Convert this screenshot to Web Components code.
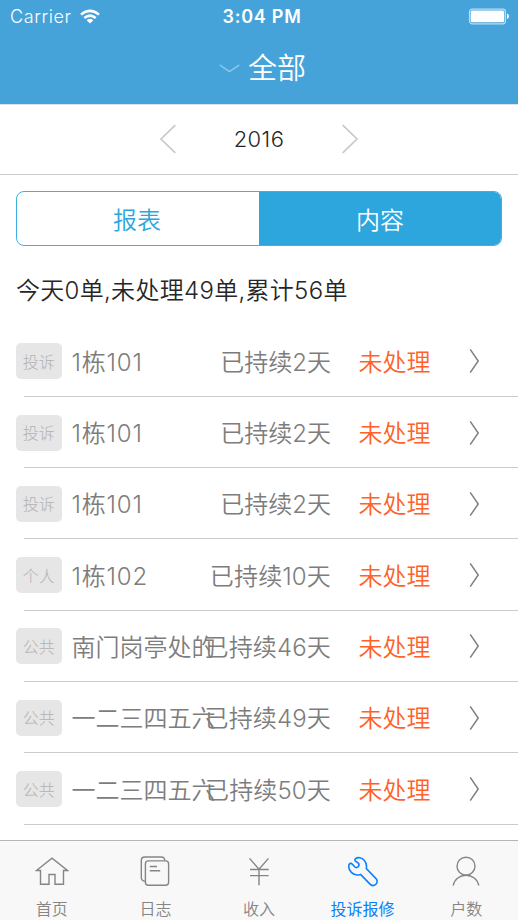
<!DOCTYPE html>
<html lang="zh-CN">
<head>
<meta charset="utf-8">
<meta name="viewport" content="width=device-width">
<title>投诉报修</title>
<style>
html, body { margin: 0; height: 100%; }
body { background: #fff; overflow: hidden; font-family: Inter, "Noto Sans CJK SC", sans-serif; font-weight: 350; }
</style>
</head>
<body>
<repair-app></repair-app>
<script>
const define = (name, html, setup) => customElements.define(name, class extends HTMLElement {
  constructor() {
    super();
    const t = document.createElement('template');
    t.innerHTML = html;
    this.attachShadow({ mode: 'open' }).append(t.content.cloneNode(true));
  }
  connectedCallback() { if (setup) setup(this, this.shadowRoot); }
});

define('status-bar', `
<style>
:host { display: grid; grid-template-columns: 1fr auto 1fr; align-items: center; height: 33px; padding: 0 9px 0 10px; box-sizing: border-box; color: #fff; font-size: 18px; }
.left { display: flex; align-items: center; gap: 8px; font-weight: 350; letter-spacing: .6px; }
.time { font-weight: 600; letter-spacing: .75px; padding-left: 5px; }
.right { display: flex; justify-content: flex-end; }
svg { display: block; }
</style>
<div class="left"><span>Carrier</span>
<svg width="20" height="16" viewBox="0 0 20 16" fill="none" stroke="#fff" stroke-width="2.5"><path d="M1 5.6Q10-1.8 19 5.6M4.3 9Q10 4.2 15.7 9"/><path d="M6.7 11.2Q10 8.5 13.3 11.2L10 14.6Z" fill="#fff" stroke="none"/></svg></div>
<span class="time">3:04 PM</span>
<div class="right"><svg width="41" height="17" viewBox="0 0 41 17"><rect x="1.5" y="1.2" width="36" height="14.6" rx="2.8" fill="none" stroke="#b9def2" stroke-width="1.2"/><rect x="2.7" y="2.5" width="33.5" height="11.7" rx="1.5" fill="#fff"/><path d="M39 5.5Q41 6 41 8.3T39 11Z" fill="#fff"/></svg></div>`);

define('nav-title', `
<style>
:host { display: flex; align-items: center; justify-content: center; gap: 8px; height: 71px; color: #fff; font-size: 29px; padding-left: 7px; }
svg { display: block; }
span { line-height: 40px; }
</style>
<svg width="21" height="9" viewBox="0 0 21 9" fill="none" stroke="#8ccbee" stroke-width="1.5"><path d="M.8 1L10.5 7.6 20.2 1"/></svg>
<span><slot></slot></span>`);

define('year-picker', `
<style>
:host { display: flex; align-items: center; justify-content: space-between; height: 71px; padding: 0 159px 1px; box-sizing: border-box; border-bottom: 1px solid #cbcbcb; border-top: 1px solid #d8e4ea; color: #262626; font-size: 22px; font-weight: 350; letter-spacing: .4px; }
svg { display: block; fill: none; stroke: #c9c9c9; stroke-width: 1.7; }
</style>
<svg width="18" height="30" viewBox="0 0 18 30"><path d="M16.3 1.2L2 15 16.3 28.8"/></svg>
<span><slot></slot></span>
<svg width="18" height="30" viewBox="0 0 18 30"><path d="M1.7 1.2L16 15 1.7 28.8"/></svg>`);

define('segment-control', `
<style>
:host { display: grid; grid-template-columns: 1fr 1fr; height: 55px; margin: 16px 16px 0; box-sizing: border-box; border: 1px solid #3fb0e2; border-radius: 8px; overflow: hidden; font-size: 24px; }
div { display: grid; place-items: center; color: #2ca6dd; padding: 0 2px 1px 0; }
.on { background: #2ca6dd; color: #fff; padding-right: 0; }
</style>
<div><slot name="first"></slot></div><div class="on"><slot name="second"></slot></div>`);

define('summary-line', `
<style>:host { display: flex; align-items: center; height: 79.6px; padding: 6px 16px 0; box-sizing: border-box; font-size: 24px; color: #262626; white-space: nowrap; letter-spacing: .3px; }</style>
<span><slot></slot></span>`);

define('ticket-row', `
<style>
:host { display: block; height: 71.3px; box-sizing: border-box; }
.row { display: grid; grid-template-columns: 55.5px 133.5px 126px 28px 110px auto; align-items: center; height: 100%; padding-left: 16px; box-sizing: border-box; font-size: 24px; color: #7d7d7d; white-space: nowrap; position: relative; }
.row::after { content: ""; position: absolute; left: 24px; right: 0; bottom: 0; height: 1px; background: #cbcbcb; }
.badge { display: grid; place-items: center; width: 45.5px; height: 36px; border-radius: 5px; background: #e6e6e6; color: #b2b2b2; font-size: 16px; font-weight: 300; box-sizing: border-box; padding-bottom: 1px; }
.days { display: flex; justify-content: flex-end; }
.name, .days, .state { padding-bottom: 2px; }
:host([name^="1"]) .name { letter-spacing: .8px; }
.long { letter-spacing: .15px; }
.state { grid-column: 5; color: #ff6128; margin-left: -.5px; }
svg { display: block; }
</style>
<div class="row"><span class="badge"></span><span class="name"></span><span class="days"></span><span class="state">未处理</span>
<svg width="11" height="26" viewBox="0 0 11 26" fill="none" stroke="#7f7f7f" stroke-width="1.5"><path d="M1.2 1.4L9.2 13 1.2 24.6"/></svg></div>`,
(el, root) => {
  for (const key of ['badge', 'name', 'days']) root.querySelector('.' + key).textContent = el.getAttribute(key);
  root.querySelector('.days').classList.toggle('long', el.getAttribute('days').length > 5);
});

define('tab-item', `
<style>
:host { display: flex; flex-direction: column; align-items: center; color: #858585; font-size: 16px; padding-top: 13px; }
:host([active]) { color: #0b80fb; font-weight: 400; }
.icon { height: 36px; display: grid; place-items: center; }
span { line-height: 24px; margin-top: 7px; }
::slotted(svg) { display: block; fill: none; stroke: currentColor; stroke-width: 1.4; }
</style>
<div class="icon"><slot name="icon"></slot></div><span><slot></slot></span>`);

define('tab-bar', `
<style>:host { display: grid; grid-template-columns: repeat(5, 1fr); height: 80px; box-sizing: border-box; border-top: 1px solid #b5b5b5; background: #f8f8f8; }</style>
<slot></slot>`);

define('repair-app', `
<style>
:host { display: flex; flex-direction: column; height: 920px; width: 518px; overflow: hidden; }
header { background: #46a3d9; height: 104px; flex: none; }
main { flex: 1; min-height: 0; overflow: hidden; }
tab-bar { flex: none; }
</style>
<header><status-bar></status-bar><nav-title>全部</nav-title></header>
<main>
<year-picker>2016</year-picker>
<segment-control><span slot="first">报表</span><span slot="second">内容</span></segment-control>
<summary-line>今天0单,未处理49单,累计56单</summary-line>
<ticket-row badge="投诉" name="1栋101" days="已持续2天"></ticket-row>
<ticket-row badge="投诉" name="1栋101" days="已持续2天"></ticket-row>
<ticket-row badge="投诉" name="1栋101" days="已持续2天"></ticket-row>
<ticket-row badge="个人" name="1栋102" days="已持续10天"></ticket-row>
<ticket-row badge="公共" name="南门岗亭处的" days="已持续46天"></ticket-row>
<ticket-row badge="公共" name="一二三四五六" days="已持续49天"></ticket-row>
<ticket-row badge="公共" name="一二三四五六" days="已持续50天"></ticket-row>
</main>
<tab-bar>
<tab-item><svg slot="icon" width="34" height="32" viewBox="0 0 34 32"><path d="M1.5 14.5L17 2.2 32.5 14.5H28.5V28.3H20V18.5H14V28.3H5.5V14.5Z"/></svg>首页</tab-item>
<tab-item><svg slot="icon" width="30" height="32" viewBox="0 0 30 32"><rect x="5.4" y="4.9" width="23.2" height="24.4" rx="3"/><path d="M5.2 25.4C2.5 25 1.3 23.8 1.3 21.5V4.3Q1.3 1 4.6 1H21.3Q24.8 1 24.8 4.8M9.8 10.5H17M9.8 14.7H20.2"/></svg>日志</tab-item>
<tab-item><svg slot="icon" width="22" height="32" viewBox="0 0 22 32"><path d="M1.5 2.4L11 13.2 20.5 2.4M11 13.2V29.3M2 13.5H20.7M2 19.6H20.7"/></svg>收入</tab-item>
<tab-item active><svg slot="icon" width="32" height="32" viewBox="0 0 32 32" style="stroke-width:1.6"><path d="M8.6 2.6C11 .9 14.8 1.6 17.2 4.2C19.2 6.5 20 9.5 19.3 12.6L29 22.6C30.6 24.5 30.4 27 28.7 28.4C26.9 29.9 24.4 29.6 22.8 27.9L13.6 18.5C10.5 19.5 6.8 18.9 4.3 16.4C2 14 1.3 11 2.1 8.6C2.7 7.1 4.4 7 5.4 8.2L7.7 10.8C8.7 11.9 10 11.8 11 10.8C12.3 9.6 12.4 8.2 11.3 7.1L8.5 5.1C7.6 4.4 7.7 3.3 8.6 2.6Z"/></svg>投诉报修</tab-item>
<tab-item><svg slot="icon" width="28" height="32" viewBox="0 0 28 32"><circle cx="14" cy="10.2" r="9"/><path d="M1.2 29.5C2.5 23 7.8 19.3 14 19.3S25.5 23 26.8 29.5"/></svg>户数</tab-item>
</tab-bar>`);
</script>
</body>
</html>
